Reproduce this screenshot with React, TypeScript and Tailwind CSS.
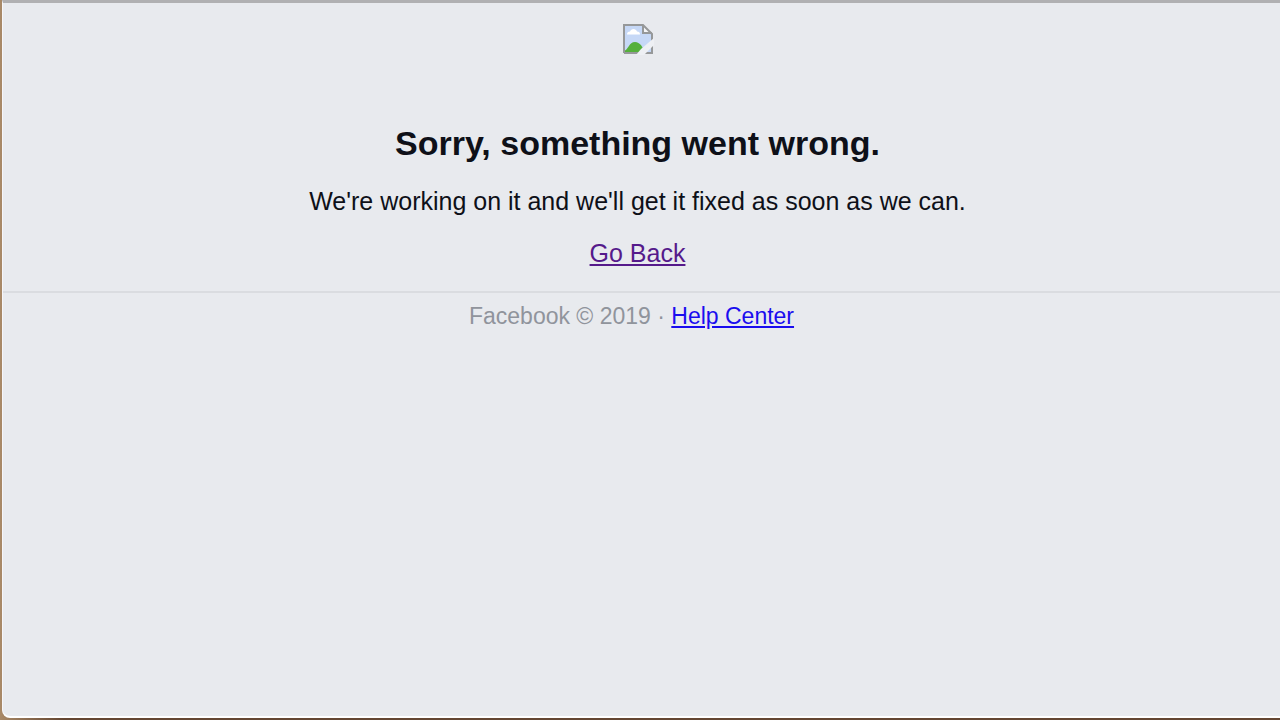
function BrokenImageIcon() {
  return (
    <svg
      role="img"
      aria-label="Missing image"
      width="32"
      height="32"
      viewBox="0 0 32 32"
      className="block"
    >
      <path d="M2 2H21L30 11V30H2Z" fill="#c6d8f6" />
      <path
        d="M5 11.500c0-2 1-3 3-3 1-3.500 6-3.500 7 0 2 0 3 1 3 3Z"
        fill="#ffffff"
      />
      <path d="M2 30V28c4-1 5-9 11-9 5 0 8 5 10 11Z" fill="#55b03b" />
      <path d="M21 2V10H30Z" fill="#f4f5f7" />
      <path
        d="M2 30V2H21L30 11V30H2M21 2V10H30"
        fill="none"
        stroke="#969899"
        strokeWidth="2"
      />
      <path d="M14 32L19 26L32 15V22L22 32Z" fill="#eef0f4" />
    </svg>
  );
}

export default function App() {
  return (
    <div className="flex min-h-screen bg-linear-to-r from-[#a98a68] to-[#644632] to-5% pb-0.5 pl-0.5 font-['Liberation_Sans',Arial,sans-serif]">
      <div className="flex-1 rounded-bl-lg border-b-2 border-l border-b-white border-l-[#f6f6fa] border-t-3 border-t-[#b0b0b2] bg-[#e8eaee] text-center text-[#0e1018]">
        <main className="flex flex-col items-center pr-2 pt-5">
          <BrokenImageIcon />
          <h1 className="mt-16 text-[34px] leading-[48px] font-bold">
            Sorry, something went wrong.
          </h1>
          <p className="mt-4 text-[25px] leading-[36px]">
            We're working on it and we'll get it fixed as soon as we can.
          </p>
          <a href="#back" className="mt-4 text-[25px] leading-[36px] text-[#551a8b] underline">
            Go Back
          </a>
        </main>
        <footer className="mt-5 border-t-2 border-[#dadce0] pr-5 pt-2 text-[23px] leading-[30px] text-[#90949c]">
          Facebook © 2019 ·{" "}
          <a href="#help" className="text-[#1a0dee] underline">
            Help Center
          </a>
        </footer>
      </div>
    </div>
  );
}
